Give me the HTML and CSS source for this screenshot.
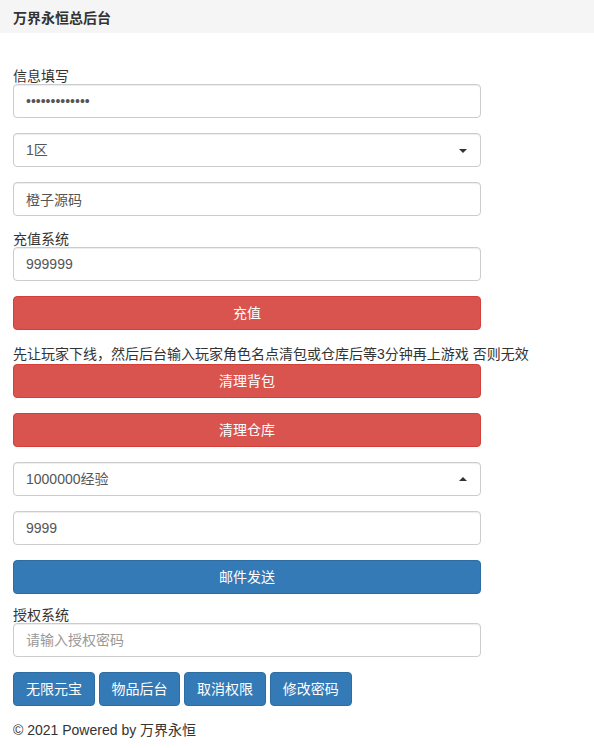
FILE: index.html
```html
<!DOCTYPE html>
<html lang="zh">
<head>
<meta charset="utf-8">
<title>万界永恒总后台</title>
<link rel="stylesheet" href="styles.css">
</head>
<body>
<header class="topbar"><span class="brand">万界永恒总后台</span></header>
<main class="main">
  <label class="label">信息填写</label>
  <input class="control" type="password" value="1234567890123">
  <div class="select down"><span>1区</span></div>
  <input class="control" type="text" value="橙子源码">
  <label class="label">充值系统</label>
  <input class="control" type="text" value="999999">
  <button class="btn danger block">充值</button>
  <p class="note">先让玩家下线，然后后台输入玩家角色名点清包或仓库后等3分钟再上游戏 否则无效</p>
  <button class="btn danger block">清理背包</button>
  <button class="btn danger block">清理仓库</button>
  <div class="select up"><span>1000000经验</span></div>
  <input class="control" type="text" value="9999">
  <button class="btn primary block">邮件发送</button>
  <label class="label tight">授权系统</label>
  <input class="control" type="text" placeholder="请输入授权密码">
  <div class="btnrow">
    <button class="btn primary">无限元宝</button>
    <button class="btn primary">物品后台</button>
    <button class="btn primary">取消权限</button>
    <button class="btn primary">修改密码</button>
  </div>
  <footer class="footer">© 2021 Powered by 万界永恒</footer>
</main>
</body>
</html>
```
FILE: styles.css
```css
* { box-sizing: border-box; }
html, body { margin: 0; padding: 0; background: #fff; }
body {
  font-family: "Liberation Sans", Arial, "Noto Sans CJK SC", sans-serif;
  font-size: 14px;
  color: #333;
}
.topbar {
  height: 33px;
  background: #f5f5f5;
  display: flex;
  align-items: center;
  padding: 0 13px;
}
.brand { font-weight: bold; font-size: 14px; color: #333; }
.main {
  padding: 35px 13px 0;
  width: 494px;
  display: flex;
  flex-direction: column;
}
.label {
  display: block;
  line-height: 16px;
  height: 16px;
  color: #333;
}
.label.tight { margin-top: -1px; height: 15px; line-height: 15px; }
.control, .select {
  display: block;
  width: 468px;
  height: 34px;
  padding: 6px 12px;
  font-family: inherit;
  font-size: 14px;
  color: #555;
  background: #fff;
  border: 1px solid #ccc;
  border-radius: 4px;
  margin: 0 0 15px;
  outline: none;
  box-shadow: inset 0 1px 1px rgba(0,0,0,.075);
}
.control::placeholder { color: #999; }
.select {
  position: relative;
  line-height: 20px;
}
.select::after {
  content: "";
  position: absolute;
  right: 13px;
  top: 15px;
  border-left: 4px solid transparent;
  border-right: 4px solid transparent;
}
.select.down::after { border-top: 4px solid #333; }
.select.up::after { border-bottom: 4px solid #333; top: 14px; }
.btn {
  display: inline-block;
  height: 34px;
  padding: 6px 12px;
  font-family: inherit;
  font-size: 14px;
  line-height: 20px;
  color: #fff;
  border: 1px solid transparent;
  border-radius: 4px;
  cursor: pointer;
}
.btn.block { width: 468px; margin: 0 0 15px; }
.danger { background: #d9534f; border-color: #d43f3a; }
.primary { background: #337ab7; border-color: #2e6da4; }
.note {
  margin: 0;
  line-height: 19px;
  height: 19px;
  white-space: nowrap;
  color: #333;
}
.btnrow {
  display: flex;
  gap: 3.8px;
  margin-bottom: 15px;
}
.btnrow .btn { width: 81.8px; padding: 6px 0; }
.footer {
  line-height: 18px;
  color: #333;
}
```
